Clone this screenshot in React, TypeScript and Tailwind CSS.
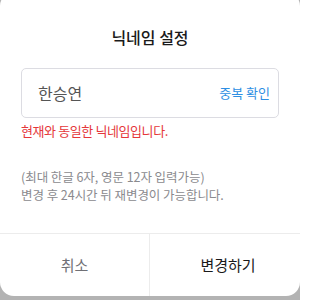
import React from "react";

export default function App() {
  return (
    <div
      className="w-[300px] h-[300px] overflow-hidden bg-[#b3b3b3]"
      style={{ fontFamily: '"Noto Sans CJK KR", "Noto Sans", sans-serif' }}
    >
      <div className="mt-[-8px] h-[304px] w-[300px] rounded-[14px] bg-white flex flex-col">
        <div className="h-[76px] flex items-end justify-center pb-[21px]">
          <span className="text-[16px] leading-[20px] font-medium text-[#1a1a1a]">닉네임 설정</span>
        </div>
        <div className="mx-[21px] h-[50px] rounded-[5px] border border-[#dcdce2] flex items-center justify-between pl-[16px] pr-[8px]">
          <span className="text-[16px] text-[#555555]">한승연</span>
          <span className="text-[13px] text-[#2d8fe3]">중복 확인</span>
        </div>
        <div className="mx-[21px] mt-[4px] text-[13px] leading-[18px] text-[#e5373a] tracking-[-0.4px]">
          현재와 동일한 닉네임입니다.
        </div>
        <div className="mx-[21px] mt-[28px] flex flex-col text-[12.5px] leading-[17.5px] text-[#8a8a8e] tracking-[-0.05px]">
          <span>(최대 한글 6자, 영문 12자 입력가능)</span>
          <span>변경 후 24시간 뒤 재변경이 가능합니다.</span>
        </div>
        <div className="flex-1" />
        <div className="h-[63px] border-t border-[#ececec] flex">
          <div className="w-[150px] border-r border-[#ececec] flex items-center justify-center text-[15px] text-[#707075]">
            취소
          </div>
          <div className="flex-1 flex items-center justify-center pl-[6px] text-[15px] text-[#1a1a1a]">
            변경하기
          </div>
        </div>
      </div>
    </div>
  );
}
